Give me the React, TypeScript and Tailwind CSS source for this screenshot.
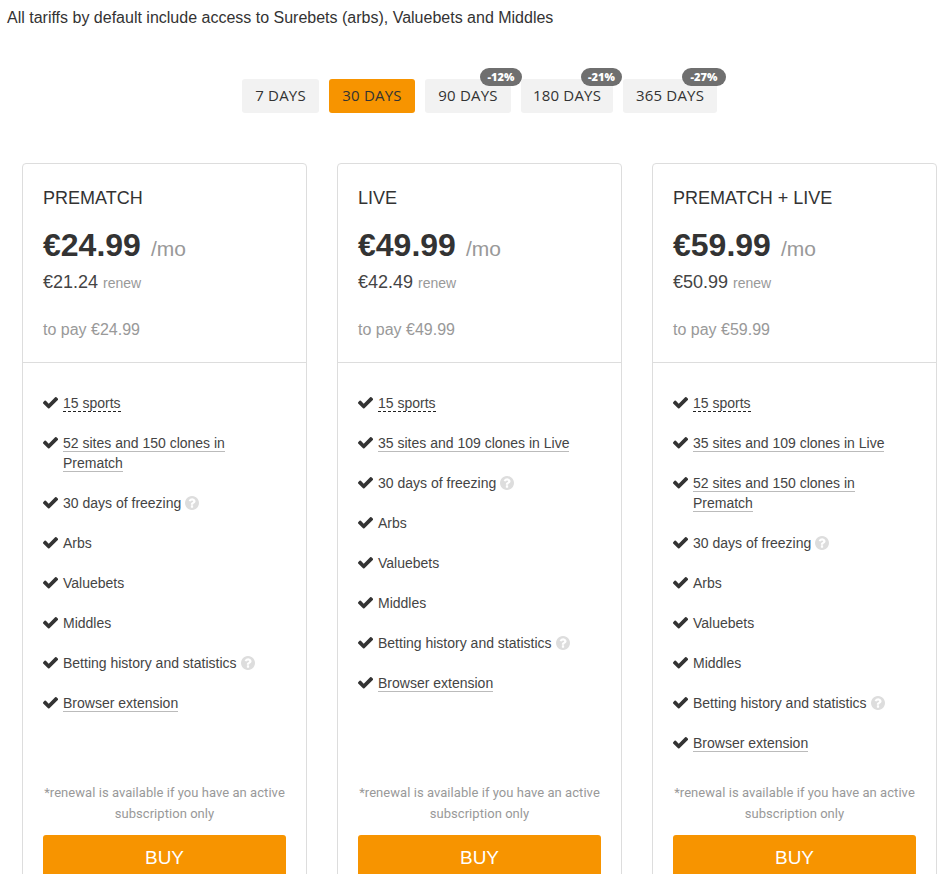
type Feature = { text: string; kind?: "dashed" | "solid" | "help" };

const sports: Feature = { text: "15 sports", kind: "dashed" };
const prematch: Feature = { text: "52 sites and 150 clones in Prematch", kind: "solid" };
const live: Feature = { text: "35 sites and 109 clones in Live", kind: "solid" };
const freezing: Feature = { text: "30 days of freezing", kind: "help" };
const arbs: Feature = { text: "Arbs" };
const value: Feature = { text: "Valuebets" };
const middles: Feature = { text: "Middles" };
const history: Feature = { text: "Betting history and statistics", kind: "help" };
const extension: Feature = { text: "Browser extension", kind: "solid" };

const plans = [
  { name: "PREMATCH", price: "€24.99", renew: "€21.24", features: [sports, prematch, freezing, arbs, value, middles, history, extension] },
  { name: "LIVE", price: "€49.99", renew: "€42.49", features: [sports, live, freezing, arbs, value, middles, history, extension] },
  { name: "PREMATCH + LIVE", price: "€59.99", renew: "€50.99", features: [sports, live, prematch, freezing, arbs, value, middles, history, extension] },
];

const tabs = [
  { label: "7 DAYS", width: "w-[77px]" },
  { label: "30 DAYS", width: "w-[86px]", active: true },
  { label: "90 DAYS", width: "w-[86px]", badge: "-12%", badgeClass: "-right-[11px] w-[42px]" },
  { label: "180 DAYS", width: "w-[92px]", badge: "-21%", badgeClass: "-right-[9px] w-[41px]" },
  { label: "365 DAYS", width: "w-[94px]", badge: "-27%", badgeClass: "-right-[9px] w-[44px]" },
];

function CheckIcon() {
  return (
    <svg viewBox="128 128 1536 1536" className="mt-[2px] h-[15px] w-[15px] shrink-0 fill-[#333]">
      <path d="M1671 566q0 40-28 68l-724 724-136 136q-28 28-68 28t-68-28l-136-136-362-362q-28-28-28-68t28-68l136-136q28-28 68-28t68 28l294 295 656-657q28-28 68-28t68 28l136 136q28 28 28 68z" />
    </svg>
  );
}

function HelpIcon() {
  return (
    <svg viewBox="128 128 1536 1536" className="h-[14px] w-[14px] fill-[#ddd]">
      <path d="M1024 1376v-192q0-14-9-23t-23-9h-192q-14 0-23 9t-9 23v192q0 14 9 23t23 9h192q14 0 23-9t9-23zm256-672q0-88-55.5-163t-138.5-116-170-41q-243 0-371 213-15 24 8 42l132 100q7 6 19 6 16 0 25-12 53-68 86-92 34-24 86-24 48 0 85.5 26t37.5 59q0 38-20 61t-68 45q-63 28-115.5 86.5t-52.5 125.5v36q0 14 9 23t23 9h192q14 0 23-9t9-23q0-19 21.5-49.5t54.5-49.5q32-18 49-28.5t46-35 44.5-48 28-60.5 12.5-81zm384 192q0 209-103 385.5t-279.5 279.5-385.5 103-385.5-103-279.5-279.5-103-385.5 103-385.5 279.5-279.5 385.5-103 385.5 103 279.5 279.5 103 385.5z" />
    </svg>
  );
}

function Tab({ label, width, active, badge, badgeClass }: { label: string; width: string; active?: boolean; badge?: string; badgeClass?: string }) {
  return (
    <div
      className={`relative flex h-[34px] items-center justify-center rounded-[3px] pb-[1px] font-['Open_Sans',sans-serif] text-[15px] tracking-[0.2px] text-[#333] ${width} ${
        active ? "bg-[#f79400]" : "bg-[#f2f2f2]"
      }`}
    >
      {label}
      {badge && (
        <span
          className={`absolute -top-[11px] flex h-[18px] items-center justify-center rounded-[9px] bg-[#6f6f6f] font-['Open_Sans',sans-serif] text-[11px] font-extrabold tracking-normal text-white ${badgeClass}`}
        >
          {badge}
        </span>
      )}
    </div>
  );
}

function FeatureRow({ text, kind }: Feature) {
  return (
    <li className="flex items-start gap-[5px] text-[14px] leading-[20px] text-[#444]">
      <CheckIcon />
      <span className="min-w-0 flex-1">
        {kind === "dashed" && <span className="border-b border-dashed border-[#222]">{text}</span>}
        {kind === "solid" && <span className="border-b border-[#bbb]">{text}</span>}
        {kind === "help" && (
          <span className="inline-flex items-center gap-[4px]">
            {text}
            <HelpIcon />
          </span>
        )}
        {!kind && text}
      </span>
    </li>
  );
}

function Card({ name, price, renew, features }: (typeof plans)[number]) {
  return (
    <div className="flex flex-col rounded-[4px] border border-[#ddd] bg-white">
      <div className="flex h-[199px] flex-col border-b border-[#ddd] px-[20px] pt-[24px]">
        <div className="text-[18px] leading-[20px] text-[#333]">{name}</div>
        <div className="mt-[17px] flex items-baseline leading-[40px]">
          <span className="text-[32px] font-bold text-[#333]">{price}</span>
          <span className="ml-[10px] text-[21px] text-[#999]">/mo</span>
        </div>
        <div className="mt-[1px] flex items-baseline leading-[24px]">
          <span className="text-[18px] text-[#444]">{renew}</span>
          <span className="ml-[5px] text-[14px] text-[#999]">renew</span>
        </div>
        <div className="mt-[23px] text-[16px] leading-[24px] text-[#999]">to pay {price}</div>
      </div>
      <div className="flex flex-col px-[20px] pb-[20px] pt-[30px]">
        <ul className="flex h-[389px] flex-col gap-[20px]">
          {features.map((f) => (
            <FeatureRow key={f.text} {...f} />
          ))}
        </ul>
        <p className="text-center font-['Roboto',sans-serif] text-[13px] leading-[21px] tracking-[0.05px] text-[#999]">
          *renewal is available if you have an active subscription only
        </p>
        <button className="mt-[11px] h-[44px] shrink-0 rounded-[3px] bg-[#f79400] pt-[2px] text-[19px] text-white">BUY</button>
      </div>
    </div>
  );
}

export default function App() {
  return (
    <div className="h-[874px] overflow-hidden bg-white font-['Liberation_Sans',Arial,sans-serif]">
      <p className="pl-[7px] pt-[8px] text-[16px] leading-[20px] text-[#333]">
        All tariffs by default include access to Surebets (arbs), Valuebets and Middles
      </p>
      <div className="mt-[51px] flex justify-center gap-[10px] pl-[10px]">
        {tabs.map((t) => (
          <Tab key={t.label} {...t} />
        ))}
      </div>
      <div className="ml-[22px] mt-[50px] grid w-[915px] grid-cols-3 gap-[30px]">
        {plans.map((p) => (
          <Card key={p.name} {...p} />
        ))}
      </div>
    </div>
  );
}
